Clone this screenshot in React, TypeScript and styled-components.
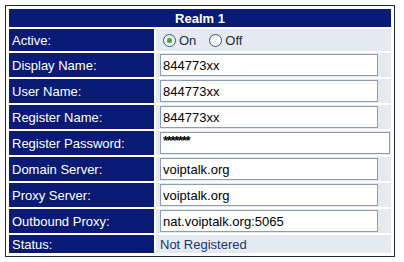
import styled, { createGlobalStyle } from "styled-components";

const GlobalStyle = createGlobalStyle`
  body {
    margin: 0;
    background: #ffffff;
    font-family: "Liberation Sans", Arial, sans-serif;
  }
`;

type Field = {
  label: string;
  value: string;
  wide?: boolean;
  masked?: boolean;
};

const fields: Field[] = [
  { label: "Display Name:", value: "844773xx" },
  { label: "User Name:", value: "844773xx" },
  { label: "Register Name:", value: "844773xx" },
  { label: "Register Password:", value: "*******", wide: true, masked: true },
  { label: "Domain Server:", value: "voiptalk.org" },
  { label: "Proxy Server:", value: "voiptalk.org" },
  { label: "Outbound Proxy:", value: "nat.voiptalk.org:5065" },
];

const Radio = ({ checked, label }: { checked?: boolean; label: string }) => (
  <RadioLabel>
    <RadioCircle>{checked && <RadioDot />}</RadioCircle>
    {label}
  </RadioLabel>
);

export default function App() {
  return (
    <>
      <GlobalStyle />
      <Page>
        <Frame>
          <Header>Realm 1</Header>

          <Label>Active:</Label>
          <Value $height={22}>
            <Radio checked label="On" />
            <Radio label="Off" />
          </Value>

          {fields.map((f) => (
            <Row key={f.label}>
              <Label>{f.label}</Label>
              <Value $height={24}>
                <TextBox
                  $wide={f.wide}
                  $masked={f.masked}
                  defaultValue={f.value}
                  type="text"
                />
              </Value>
            </Row>
          ))}

          <Label>Status:</Label>
          <Value $height={18}>
            <StatusText>Not Registered</StatusText>
          </Value>
        </Frame>
      </Page>
    </>
  );
}

const Page = styled.div`
  padding: 5px 0 0 5px;
`;

const Frame = styled.div`
  width: 382px;
  padding: 3px;
  border: 1px solid #1a2744;
  display: grid;
  grid-template-columns: 145px 235px;
  column-gap: 2px;
  row-gap: 2px;
`;

const Row = styled.div`
  display: contents;
`;

const Header = styled.div`
  grid-column: 1 / -1;
  height: 18px;
  background: #0a1b76;
  color: #ffffff;
  font-weight: bold;
  font-size: 13px;
  display: flex;
  align-items: center;
  justify-content: center;
`;

const Label = styled.div`
  background: #0a1b76;
  color: #ffffff;
  font-size: 13px;
  padding-left: 3px;
  display: flex;
  align-items: center;
`;

const Value = styled.div<{ $height: number }>`
  height: ${(p) => p.$height}px;
  background: #e5eaf0;
  display: flex;
  align-items: center;
  padding-left: 4px;
  gap: 10px;
`;

const TextBox = styled.input<{ $wide?: boolean; $masked?: boolean }>`
  box-sizing: border-box;
  width: ${(p) => (p.$wide ? "230px" : "218px")};
  height: 22px;
  border: 1px solid #8a9fb5;
  background: #ffffff;
  padding: ${(p) => (p.$masked ? "0 2px 5px" : "0 2px")};
  font-family: "Liberation Sans", Arial, sans-serif;
  font-size: 13px;
  font-weight: ${(p) => (p.$masked ? "bold" : "normal")};
  letter-spacing: ${(p) => (p.$masked ? "-1.3px" : "0")};
  color: #000000;
  outline: none;
`;

const RadioLabel = styled.label`
  display: flex;
  align-items: center;
  gap: 3px;
  font-size: 13px;
  color: #1e2a4a;
  margin-left: 3px;
`;

const RadioCircle = styled.span`
  box-sizing: border-box;
  width: 13px;
  height: 13px;
  border-radius: 50%;
  border: 1px solid #2a5a8a;
  background: radial-gradient(circle at 60% 60%, #ffffff 40%, #dcdfe6 100%);
  display: flex;
  align-items: center;
  justify-content: center;
`;

const RadioDot = styled.span`
  width: 5px;
  height: 5px;
  border-radius: 50%;
  background: #3fa83a;
`;

const StatusText = styled.span`
  font-size: 13px;
  color: #1c3570;
`;
